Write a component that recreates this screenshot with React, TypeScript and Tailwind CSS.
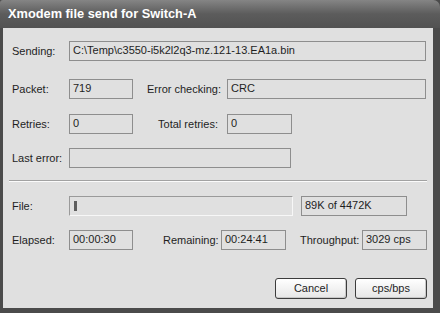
const font = { fontFamily: '"Liberation Sans", Arial, sans-serif' };

function Field({ w, children }: { w: string; children?: React.ReactNode }) {
  return (
    <div
      className={`${w} h-[20px] border border-[#8e8e8e] bg-[#e0e0e0] pl-[3px] text-[11px] leading-[16px] text-[#1e1e1e] whitespace-nowrap overflow-hidden`}
    >
      {children}
    </div>
  );
}

function Label({ w, children, right }: { w: string; children: React.ReactNode; right?: boolean }) {
  return (
    <div className={`${w} ${right ? 'text-right pr-[9px]' : ''} text-[11px] text-[#1e1e1e] whitespace-nowrap`}>
      {children}
    </div>
  );
}

function Button({ children }: { children: React.ReactNode }) {
  return (
    <button className="h-[21px] w-[72px] rounded-[3px] border border-[#3c3c3c] bg-gradient-to-b from-[#ffffff] to-[#e6e6e6] text-[11px] text-[#1e1e1e] shadow-[inset_-1px_-1px_0_#c8c8c8]">
      {children}
    </button>
  );
}

export default function App() {
  return (
    <div className="w-[440px] h-[313px] bg-[#4b4b4b] flex flex-col" style={font}>
      {/* Title bar */}
      <div className="h-[28px] shrink-0 rounded-tr-[7px] rounded-tl-[3px] bg-gradient-to-b from-[#858585] via-[#5c5c5c] to-[#525252] flex items-center pl-[8px]">
        <span className="text-white font-bold text-[12.8px]">Xmodem file send for Switch-A</span>
      </div>

      {/* Body */}
      <div className="flex-1 ml-[3px] mr-[7px] mb-[5px] bg-[#e0e0e0] flex flex-col">
        <div className="pl-[9px] pt-[13px] flex flex-col">
          <div className="flex items-center">
            <Label w="w-[57px]">Sending:</Label>
            <Field w="w-[357px]">C:\Temp\c3550-i5k2l2q3-mz.121-13.EA1a.bin</Field>
          </div>

          <div className="flex items-center mt-[18px]">
            <Label w="w-[57px]">Packet:</Label>
            <Field w="w-[64px]">719</Field>
            <div className="w-[14px]" />
            <Label w="w-[80px]">Error checking:</Label>
            <Field w="w-[199px]">CRC</Field>
          </div>

          <div className="flex items-center mt-[15px]">
            <Label w="w-[57px]">Retries:</Label>
            <Field w="w-[64px]">0</Field>
            <Label w="w-[94px]" right>
              Total retries:
            </Label>
            <Field w="w-[65px]">0</Field>
          </div>

          <div className="flex items-center mt-[14px]">
            <Label w="w-[57px]">Last error:</Label>
            <Field w="w-[222px]" />
          </div>
        </div>

        {/* Separator */}
        <div className="mt-[12px] mx-[6px] h-[2px] border-t border-[#a2a2a2] border-b border-b-[#fbfbfb]" />

        <div className="pl-[9px] mt-[14px] flex flex-col">
          <div className="flex items-center">
            <Label w="w-[57px]">File:</Label>
            <div className="w-[224px] h-[20px] border-t border-l border-[#9a9a9a] border-b border-r border-b-[#f7f7f7] border-r-[#f7f7f7] pl-[4px] pt-[4px]">
              <div className="w-[3px] h-[10px] bg-[#5e5e5e]" />
            </div>
            <div className="w-[8px]" />
            <Field w="w-[106px]">89K of 4472K</Field>
          </div>

          <div className="flex items-center mt-[14px]">
            <Label w="w-[57px]">Elapsed:</Label>
            <Field w="w-[64px]">00:00:30</Field>
            <div className="w-[30px]" />
            <Label w="w-[58px]">Remaining:</Label>
            <Field w="w-[65px]">00:24:41</Field>
            <div className="w-[14px]" />
            <Label w="w-[62px]">Throughput:</Label>
            <Field w="w-[65px]">3029 cps</Field>
          </div>
        </div>

        <div className="mt-[28px] flex justify-end gap-[8px] pr-[6px]">
          <Button>Cancel</Button>
          <Button>cps/bps</Button>
        </div>
      </div>
    </div>
  );
}
